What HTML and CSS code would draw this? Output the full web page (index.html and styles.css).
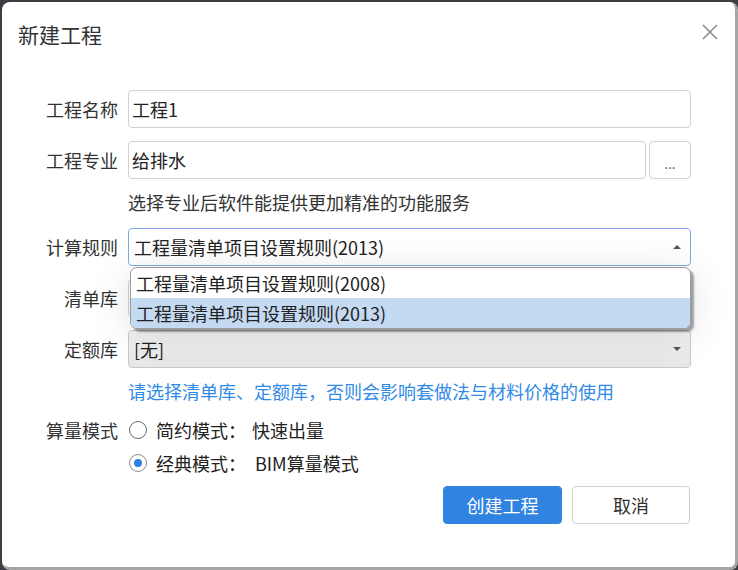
FILE: index.html
```html
<!DOCTYPE html>
<html lang="zh-CN">
<head>
  <meta charset="UTF-8" />
  <meta name="viewport" content="width=device-width, initial-scale=1.0"/>
  <title>新建工程</title>
  <link rel="stylesheet" href="styles.css">
</head>
<body>
  <div class="dialog">
    <div class="dialog-header">
      <span class="dialog-title">新建工程</span>
      <svg class="close-icon" width="16" height="16" viewBox="0 0 16 16">
        <path d="M1 1 L15 15 M15 1 L1 15" />
      </svg>
    </div>

    <div class="form">
      <div class="row">
        <label class="label">工程名称</label>
        <div class="input">工程1</div>
      </div>

      <div class="row">
        <label class="label">工程专业</label>
        <div class="field-group">
          <div class="input">给排水</div>
          <button class="more-btn">...</button>
        </div>
      </div>

      <p class="hint">选择专业后软件能提供更加精准的功能服务</p>

      <div class="row">
        <label class="label">计算规则</label>
        <div class="select-wrap">
          <div class="select select-active">
            <span>工程量清单项目设置规则(2013)</span>
            <span class="arrow arrow-up"></span>
          </div>
          <ul class="dropdown">
            <li>工程量清单项目设置规则(2008)</li>
            <li class="selected">工程量清单项目设置规则(2013)</li>
          </ul>
        </div>
      </div>

      <div class="row">
        <label class="label">清单库</label>
        <div class="select">
          <span></span>
          <span class="arrow arrow-down"></span>
        </div>
      </div>

      <div class="row">
        <label class="label">定额库</label>
        <div class="select select-disabled">
          <span>[无]</span>
          <span class="arrow arrow-down"></span>
        </div>
      </div>

      <p class="hint hint-blue">请选择清单库、定额库，否则会影响套做法与材料价格的使用</p>

      <div class="row row-radio">
        <label class="label">算量模式</label>
        <div class="radio-option">
          <span class="radio"></span>
          <span>简约模式：</span>
          <span class="radio-desc">快速出量</span>
        </div>
      </div>

      <div class="row row-radio row-radio-second">
        <span></span>
        <div class="radio-option">
          <span class="radio radio-checked"></span>
          <span>经典模式：</span>
          <span class="radio-desc">BIM算量模式</span>
        </div>
      </div>
    </div>

    <div class="dialog-footer">
      <button class="btn btn-primary">创建工程</button>
      <button class="btn">取消</button>
    </div>
  </div>
</body>
</html>
```

FILE: styles.css
```css
* {
  box-sizing: border-box;
  font-family: "Noto Sans CJK SC", "Noto Sans", sans-serif;
}

html, body {
  margin: 0;
  height: 100%;
}

body {
  background: #3a3e43;
  overflow: hidden;
}

.dialog {
  width: 736px;
  height: 568px;
  margin: 2px 0 0 2px;
  background: #ffffff;
  border-right: 3px solid #a6a6a6;
  border-bottom: 3px solid #a6a6a6;
  border-radius: 8px;
}

.dialog-header {
  height: 60px;
  display: flex;
  align-items: center;
  justify-content: space-between;
  padding: 0 17px 0 16px;
}

.dialog-title {
  font-size: 21px;
  color: #333;
  line-height: 26px;
  margin-top: 4px;
}

.close-icon {
  fill: none;
  stroke: #8a8a8a;
  stroke-width: 1.5;
}

.form {
  padding: 28px 44px 0 0;
  font-size: 18px;
  color: #333;
}

.row {
  display: grid;
  grid-template-columns: 116px 1fr;
  column-gap: 10px;
  align-items: center;
  margin-bottom: 13px;
}

.label {
  text-align: right;
  line-height: 24px;
}

.input {
  flex: 1;
  height: 38px;
  display: flex;
  align-items: center;
  padding: 0 3px;
  border: 1px solid #d2d2d2;
  border-radius: 4px;
  color: #222;
  line-height: 24px;
}

.field-group {
  display: flex;
  gap: 3px;
}

.more-btn {
  width: 42px;
  height: 38px;
  border: 1px solid #d2d2d2;
  border-radius: 4px;
  background: #ffffff;
  color: #444;
  font-size: 13px;
  padding: 8px 0 0;
  line-height: 20px;
}

.hint {
  margin: -2px 0 14px 126px;
  line-height: 24px;
  color: #333;
}

.hint-blue {
  color: #2f8ae8;
  margin: -2px 0 14px 126px;
}

.select-wrap {
  position: relative;
}

.select {
  height: 38px;
  display: flex;
  align-items: center;
  justify-content: space-between;
  padding: 0 9px 0 5px;
  border: 1px solid #d2d2d2;
  border-radius: 4px;
  color: #222;
  line-height: 24px;
}

.select-active {
  border-color: #7ea8ea;
}

.select-disabled {
  background: linear-gradient(#f3f3f3, #e7e7e7);
  border-color: #c9c9c9;
}

.arrow {
  width: 0;
  height: 0;
  border-left: 4px solid transparent;
  border-right: 4px solid transparent;
}

.arrow-up {
  border-bottom: 4px solid #555;
}

.arrow-down {
  border-top: 4px solid #555;
}

.dropdown {
  position: absolute;
  top: 39px;
  left: 2px;
  right: 0;
  z-index: 10;
  margin: 0;
  padding: 0;
  list-style: none;
  background: #ffffff;
  border: 1px solid #9c9c9c;
  border-radius: 7px;
  overflow: hidden;
  box-shadow: 3px 3px 2px rgba(0, 0, 0, 0.35), 0 6px 40px rgba(0, 0, 0, 0.12);
}

.dropdown li {
  height: 30px;
  line-height: 30px;
  padding-left: 5px;
  color: #222;
}

.dropdown .selected {
  background-color: #c4daf2;
}

.row-radio {
  margin-bottom: 7px;
}

.radio-option {
  display: flex;
  align-items: center;
  height: 26px;
  line-height: 24px;
  color: #222;
}

.radio {
  width: 18px;
  height: 18px;
  margin: 0 9px 0 1px;
  border: 1.5px solid #6b6b6b;
  border-radius: 50%;
  background: #ffffff;
  display: flex;
  align-items: center;
  justify-content: center;
}

.radio-checked {
  border-color: #8c8c8c;
}

.radio-checked::after {
  content: "";
  width: 8px;
  height: 8px;
  border-radius: 50%;
  background: #2f80e2;
}

.radio-desc {
  margin-left: 6px;
}

.row-radio-second .radio-desc {
  margin-left: 9px;
}

.dialog-footer {
  display: flex;
  justify-content: flex-end;
  gap: 10px;
  padding: 3px 45px 0 0;
}

.btn {
  width: 118px;
  height: 38px;
  border: 1px solid #d0d0d0;
  border-radius: 4px;
  background: #ffffff;
  color: #333;
  font-size: 18px;
  line-height: 24px;
  cursor: pointer;
}

.btn-primary {
  width: 119px;
  background-color: #3183e2;
  border-color: #3183e2;
  color: #ffffff;
}
```
